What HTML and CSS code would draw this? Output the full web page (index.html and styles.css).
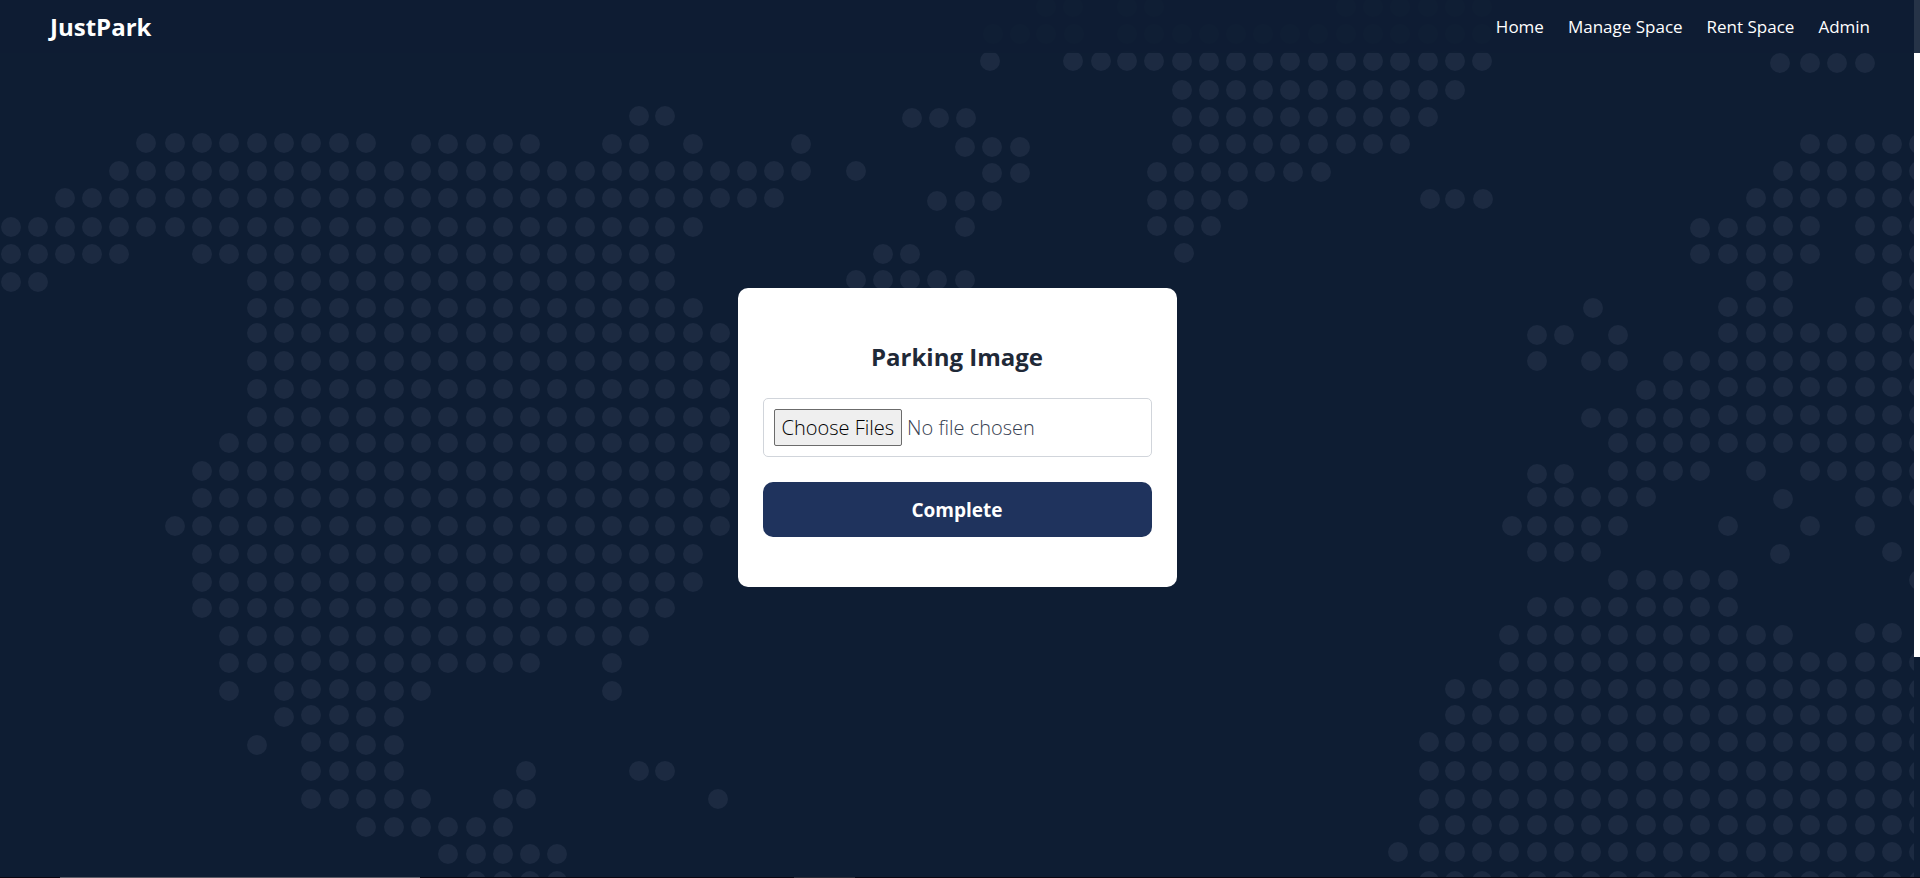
FILE: index.html
```html
<!DOCTYPE html>
<html lang="en">
<head>
<meta charset="utf-8">
<title>JustPark</title>
<link rel="stylesheet" href="styles.css">
</head>
<body>
<header class="topbar">
  <a class="brand" href="#">JustPark</a>
  <nav class="nav">
    <a href="#">Home</a>
    <a href="#">Manage Space</a>
    <a href="#">Rent Space</a>
    <a href="#">Admin</a>
  </nav>
</header>
<div class="page">
  <main class="stage">
    <svg class="map" viewBox="0 0 1914 877" preserveAspectRatio="xMinYMin slice" aria-hidden="true"><path id="dots"></path></svg>
    <form class="card">
      <label class="card-title" for="images">Parking Image</label>
      <input class="file" type="file" id="images" multiple>
      <button class="submit" type="button">Complete</button>
    </form>
  </main>
  <div class="scroll"><div class="thumb"></div></div>
</div>
<div class="edge"></div>
<script src="map.js"></script>
</body>
</html>
```
FILE: styles.css
```css
* { box-sizing: border-box; }

body {
  margin: 0;
  min-height: 100vh;
  display: flex;
  flex-direction: column;
  background: #0e1d33;
  font-family: "Open Sans", "Noto Sans", sans-serif;
}

.topbar {
  position: absolute;
  top: 0;
  left: 0;
  right: 0;
  z-index: 2;
  height: 53px;
  padding: 0 50px;
  display: flex;
  align-items: center;
  justify-content: space-between;
  background: rgba(14, 29, 51, 0.9);
}

.topbar a {
  color: #fff;
  text-decoration: none;
}

.brand {
  font-size: 24px;
  font-weight: 700;
}

.nav {
  display: flex;
  gap: 24px;
  font-size: 17px;
}

.page {
  flex: 1;
  display: flex;
}

.stage {
  position: relative;
  flex: 1;
  padding-bottom: 2px;
  display: flex;
  align-items: center;
  justify-content: center;
}

.map {
  position: absolute;
  inset: 0;
  width: 100%;
  height: 100%;
}

.map path {
  fill: none;
  stroke: #1c2a41;
  stroke-width: 20;
  stroke-linecap: round;
}

.card {
  position: relative;
  width: 439px;
  padding: 50px 25px;
  display: flex;
  flex-direction: column;
  background: #fff;
  border-radius: 10px;
}

.card-title {
  margin-bottom: 22px;
  font-size: 24px;
  font-weight: 700;
  line-height: 38px;
  text-align: center;
  color: #1f2937;
}

.file {
  width: 100%;
  height: 59px;
  margin-bottom: 25px;
  padding: 10px;
  border: 1px solid #d1d5db;
  border-radius: 5px;
  font-family: inherit;
  font-size: 20px;
  font-weight: 300;
  line-height: 35px;
  color: #374151;
}

.file::file-selector-button {
  height: 37px;
  margin-right: 5px;
  padding: 0 7px;
  border: 1px solid #6b6b6b;
  border-radius: 2px;
  background: #efefef;
  color: #000;
  font: inherit;
}

.submit {
  height: 55px;
  border: 0;
  border-radius: 10px;
  background: #1f335d;
  color: #fff;
  font-family: inherit;
  font-size: 19px;
  font-weight: 700;
}

.scroll {
  width: 6px;
}

.thumb {
  height: calc(75vh - 2px);
  background: #fff;
}

.edge {
  height: 1px;
  background: linear-gradient(90deg, #0a0610 60px, #5e5c66 60px 420px, #0a0610 420px 794px, #2e2c36 794px 855px, #0a0610 855px);
}
```
FILE: map.js
```js
// Column centres of the dot grid, west to east.
const west = [11, 38, 65, 92, 119, 146, 175, 202, 229, 257, 284, 311, 339, 366, 394, 421, 448, 476, 503,
  530, 557, 585, 612, 639, 665, 693, 720, 747, 774, 801, 829, 856, 883, 910, 937, 965];
const north = [1182, 1209, 1236, 1263, 1290, 1318, 1346, 1373, 1400, 1428, 1455, 1482];
const east = [1455, 1482, 1509, 1537, 1564, 1591, 1618, 1646, 1673, 1700, 1728, 1756, 1783, 1810, 1837, 1865, 1892, 1919];

// Runs of neighbouring dots: [columns, y, first, last, first, last, ...].
const runs = [
  [west, 116, 23, 24],
  [west, 143, 5, 13],
  [west, 144, 15, 19, 22, 23, 25, 25, 29, 29],
  [west, 171, 4, 29, 31, 31],
  [west, 198, 2, 28],
  [west, 227, 0, 25, 35, 35],
  [west, 254, 0, 4, 7, 24, 32, 33],
  [west, 282, 0, 1],
  [west, 281, 9, 24],
  [west, 280, 31, 35],
  [west, 308, 9, 25],
  [west, 333, 9, 26],
  [west, 361, 9, 26],
  [west, 389, 9, 26],
  [west, 417, 9, 26],
  [west, 443, 8, 26],
  [west, 471, 7, 26],
  [west, 498, 7, 26],
  [west, 526, 6, 26],
  [west, 554, 7, 25],
  [west, 582, 7, 25],
  [west, 608, 7, 24],
  [west, 636, 8, 23],
  [west, 663, 8, 10, 13, 19, 22, 22],
  [west, 661, 11, 12],
  [west, 691, 8, 8, 10, 10, 13, 15, 22, 22],
  [west, 689, 11, 12],
  [west, 717, 10, 10, 13, 14],
  [west, 715, 11, 12],
  [west, 745, 9, 9, 13, 14],
  [west, 742, 11, 12],
  [west, 771, 11, 14, 23, 24],
  [west, 799, 11, 15, 18, 18],
  [west, 827, 13, 18],
  [west, 854, 16, 20],
  [west, 881, 17, 20],
  [north, 7, 6, 11],
  [north, 34, 0, 11],
  [north, 61, 0, 11],
  [north, 90, 0, 10],
  [north, 117, 0, 9],
  [north, 144, 0, 8],
  [east, 144, 13, 17],
  [east, 171, 12, 17],
  [east, 198, 11, 17],
  [east, 228, 9, 10],
  [east, 226, 11, 13, 15, 17],
  [east, 254, 9, 13, 15, 17],
  [east, 281, 11, 12, 16, 17],
  [east, 307, 10, 12, 15, 17],
  [east, 335, 3, 4, 6, 6],
  [east, 333, 10, 17],
  [east, 361, 3, 3, 5, 6, 8, 17],
  [east, 390, 7, 9],
  [east, 387, 10, 17],
  [east, 418, 5, 9],
  [east, 415, 10, 17],
  [east, 443, 6, 17],
  [east, 474, 3, 4],
  [east, 471, 6, 9, 11, 11, 13, 17],
  [east, 497, 3, 7, 15, 17],
  [east, 499, 12, 12],
  [east, 526, 3, 6, 10, 10, 13, 13, 15, 15],
  [east, 552, 3, 5, 16, 16],
  [east, 580, 6, 10, 17, 17],
  [east, 607, 3, 10],
  [east, 635, 2, 12],
  [east, 633, 15, 16],
  [east, 662, 2, 17],
  [east, 689, 0, 17],
  [east, 715, 0, 17],
  [east, 742, 0, 17],
  [east, 771, 0, 17],
  [east, 799, 0, 17],
  [east, 825, 0, 17],
  [east, 852, 0, 17],
  [east, 881, 0, 17]
];

// Dots that sit off the regular columns: [y, x, x, ...].
const loose = [
  [7, 1046, 1073, 1127, 1154],
  [34, 993, 1020, 1046, 1074, 1127, 1154],
  [61, 990, 1073, 1101, 1127, 1154],
  [63, 1780, 1810, 1837, 1865],
  [118, 912, 939, 966],
  [147, 965, 992, 1020],
  [173, 992, 1020],
  [201, 937, 965, 992],
  [172, 1157, 1184, 1211, 1238, 1265, 1293, 1321],
  [200, 1157, 1184, 1211, 1238],
  [199, 1430, 1455, 1483],
  [226, 1157, 1184, 1211],
  [253, 1184],
  [308, 1593],
  [526, 1512],
  [554, 1780],
  [742, 1429], [771, 526, 1429], [799, 526, 718, 1429], [825, 1429], [852, 1398, 1429], [881, 1429]
];

let d = "";
const dot = (x, y) => { d += `M${x} ${y}h0`; };
for (const [cols, y, ...spans] of runs) {
  for (let i = 0; i < spans.length; i += 2) {
    for (let c = spans[i]; c <= spans[i + 1]; c++) dot(cols[c], y);
  }
}
for (const [y, ...xs] of loose) xs.forEach(x => dot(x, y));
document.getElementById("dots").setAttribute("d", d);
```
